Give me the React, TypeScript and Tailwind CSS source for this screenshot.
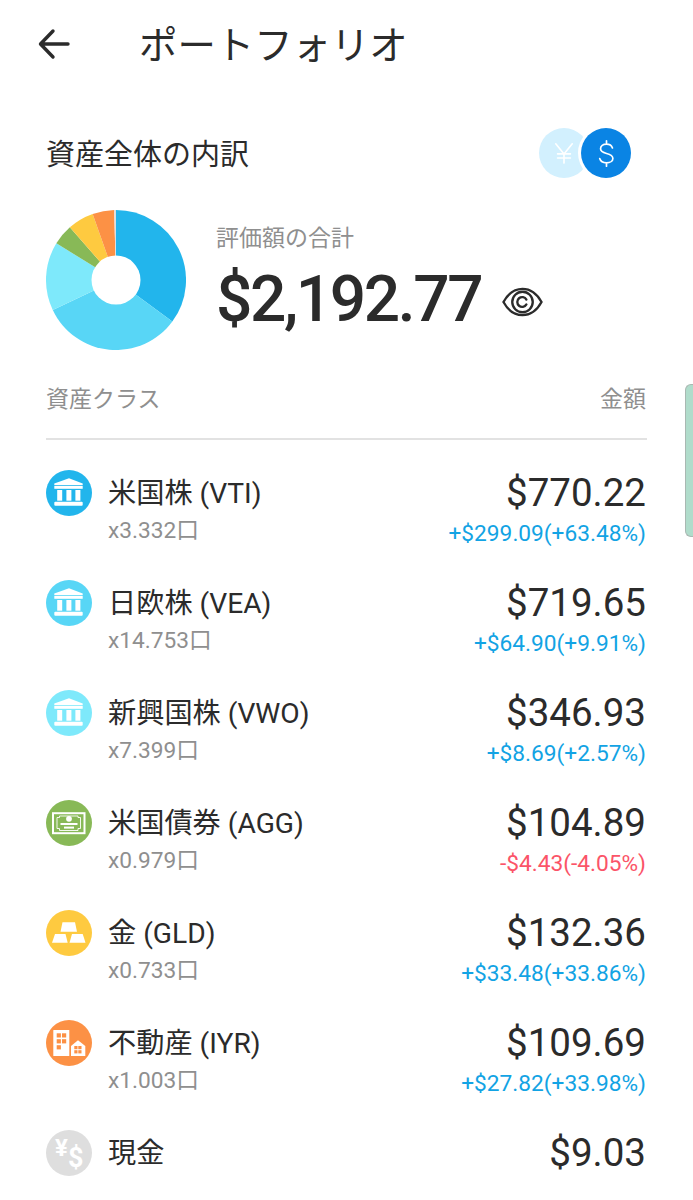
import React from 'react'

const FONT = "font-['Roboto','Noto_Sans_CJK_JP',sans-serif]"

type Asset = {
  name: string
  units?: string
  value: string
  amount: number
  change?: string
  down?: boolean
  color: string
  icon: React.ReactNode
}

const Bank = () => (
  <svg viewBox="0 0 46 46" className="w-full h-full" fill="#fff">
    <path d="M23 8.3 L36.7 13.5 V15 H8.3 V13.5 Z" />
    <rect x="8.3" y="15.8" width="28.4" height="3" />
    <rect x="11.2" y="20" width="5" height="10.7" />
    <rect x="20.4" y="20" width="5" height="10.7" />
    <rect x="29.4" y="20" width="5" height="10.7" />
    <rect x="8.3" y="31.8" width="28.4" height="3.9" rx="1" />
  </svg>
)

const Bond = () => (
  <svg viewBox="0 0 46 46" className="w-full h-full">
    <rect x="7" y="13.2" width="31.5" height="20" fill="none" stroke="#fff" strokeWidth="2" />
    <path
      d="M13.5 16 H32 V17.5 H34.5 V28.5 H32 V30.5 H13.5 V28.5 H11 V17.5 H13.5 Z"
      fill="none"
      stroke="#fff"
      strokeWidth="0.9"
    />
    <circle cx="23" cy="18.8" r="2.9" fill="#fff" />
    <rect x="14.5" y="23" width="17" height="2" fill="#fff" />
    <rect x="18" y="26.6" width="10" height="2" fill="#fff" />
  </svg>
)

const Gold = () => (
  <svg viewBox="0 0 46 46" className="w-full h-full" fill="#fff">
    <path d="M16.5 12.3 H29 L31 21.7 H14.5 Z" />
    <path d="M9 24 H19.5 L21.7 32.7 H6 Z" />
    <path d="M26 24 H36.7 L39.5 32.7 H23.5 Z" />
  </svg>
)

const Estate = () => (
  <svg viewBox="0 0 46 46" className="w-full h-full">
    <rect x="7.3" y="10" width="16" height="26" rx="0.5" fill="#fff" />
    {[
      [10.7, 13.3],
      [16, 13.3],
      [10.7, 19.2],
      [16, 19.2],
      [10.7, 25.2]
    ].map(([x, y]) => (
      <rect key={`${x}-${y}`} x={x} y={y} width="4.2" height="4.2" fill="#FC9145" />
    ))}
    <path d="M25 36 V26 L32 20.3 L39.3 26 V36 Z" fill="#fff" />
    <rect x="28.3" y="26" width="3.2" height="3.2" fill="#FC9145" />
    <rect x="32.3" y="26" width="3.2" height="3.2" fill="#FC9145" />
    <rect x="28.3" y="30.2" width="3.2" height="3.2" fill="#FC9145" />
    <rect x="32.3" y="30.2" width="3.2" height="3.2" fill="#FC9145" />
  </svg>
)

const Cash = () => (
  <div className="relative w-full h-full text-white font-bold font-['Roboto',sans-serif]">
    <span className="absolute left-[9px] top-[4px] text-[24px] leading-[28px]">¥</span>
    <span className="absolute left-[22px] top-[13px] text-[27px] leading-[30px]">$</span>
  </div>
)

const assets: Asset[] = [
  { name: '米国株 (VTI)', units: 'x3.332口', value: '$770.22', amount: 770.22, change: '+$299.09(+63.48%)', color: '#22B5EC', icon: <Bank /> },
  { name: '日欧株 (VEA)', units: 'x14.753口', value: '$719.65', amount: 719.65, change: '+$64.90(+9.91%)', color: '#58D6F6', icon: <Bank /> },
  { name: '新興国株 (VWO)', units: 'x7.399口', value: '$346.93', amount: 346.93, change: '+$8.69(+2.57%)', color: '#7EE9FB', icon: <Bank /> },
  { name: '米国債券 (AGG)', units: 'x0.979口', value: '$104.89', amount: 104.89, change: '-$4.43(-4.05%)', down: true, color: '#88B957', icon: <Bond /> },
  { name: '金 (GLD)', units: 'x0.733口', value: '$132.36', amount: 132.36, change: '+$33.48(+33.86%)', color: '#FECA40', icon: <Gold /> },
  { name: '不動産 (IYR)', units: 'x1.003口', value: '$109.69', amount: 109.69, change: '+$27.82(+33.98%)', color: '#FC9145', icon: <Estate /> },
  { name: '現金', value: '$9.03', amount: 9.03, color: '#DEDEDE', icon: <Cash /> }
]

const Donut = () => {
  const total = assets.reduce((sum, a) => sum + a.amount, 0)
  let start = 0
  const point = (deg: number) => {
    const rad = (deg * Math.PI) / 180
    return `${70 + 70 * Math.sin(rad)} ${70 - 70 * Math.cos(rad)}`
  }
  return (
    <svg viewBox="0 0 140 140" className="w-[140px] h-[140px] shrink-0">
      {assets.map((a) => {
        const sweep = (a.amount / total) * 360
        const d = `M70 70 L${point(start)} A70 70 0 ${sweep > 180 ? 1 : 0} 1 ${point(start + sweep)} Z`
        start += sweep
        return <path key={a.name} d={d} fill={a.color} />
      })}
      <circle cx="70" cy="70" r="24.5" fill="#fff" />
    </svg>
  )
}

const Row = ({ item }: { item: Asset }) => (
  <div className="flex h-[110px] items-start">
    <div
      className="w-[46px] h-[46px] rounded-full shrink-0 overflow-hidden"
      style={{ backgroundColor: item.color }}
    >
      {item.icon}
    </div>
    <div className="ml-[16px] flex-1">
      <div className="text-[28.2px] leading-[38px] text-[#2b2b2b] font-normal mt-[5px]">
        {item.name}
      </div>
      {item.units && (
        <div className="text-[22.7px] leading-[24px] text-[#8f8f8f] mt-[6px]">{item.units}</div>
      )}
    </div>
    <div className="flex flex-col items-end mt-[1px]">
      <div className="text-[38.5px] leading-[44px] text-[#2b2b2b] font-normal">{item.value}</div>
      {item.change && (
        <div className={`text-[22.7px] leading-[26px] mt-[6px] ${item.down ? 'text-[#FB5468]' : 'text-[#12A3E4]'}`}>
          {item.change}
        </div>
      )}
    </div>
  </div>
)

export default function App() {
  return (
    <div className={`${FONT} relative w-[693px] h-[1200px] overflow-hidden bg-white`}>
      <header className="flex items-center h-[88px] pl-[38px]">
        <svg viewBox="0 0 32 32" className="w-[32px] h-[32px] -mt-[1px]" fill="none" stroke="#2b2b2b" strokeWidth="3.4" strokeLinecap="round" strokeLinejoin="round">
          <path d="M30 16 H3 M15 3 L2.5 16 L15 29" />
        </svg>
        <h1 className="ml-[69px] mt-[3px] text-[38.4px] leading-[48px] font-normal text-[#2b2b2b]">ポートフォリオ</h1>
      </header>

      <main className="pl-[46px] w-[646px]">
        <div className="flex items-center justify-between mt-[39px] h-[52px]">
          <h2 className="text-[29px] leading-[40px] mt-[4px] font-normal text-[#2b2b2b]">資産全体の内訳</h2>
          <div className="relative flex w-[92px] h-[50px] mr-[15px]">
            <div className="w-[50px] h-[50px] rounded-full bg-[#D2F0FE] flex items-center justify-center">
              <svg viewBox="0 0 24 24" className="w-[22px] h-[30px]" fill="none" stroke="#fff" strokeWidth="1.8" strokeLinecap="round">
                <path d="M3 2 L12 13 L21 2 M12 13 V23 M5 13 H19 M5 17.5 H19" />
              </svg>
            </div>
            <div className="absolute left-[42px] top-0 w-[50px] h-[50px] rounded-full bg-[#0A84E4] ring-[3px] ring-white flex items-center justify-center">
              <svg viewBox="0 0 20 32" className="w-[17px] h-[29px]" fill="none" stroke="#fff" strokeWidth="2" strokeLinecap="round">
                <path d="M10 1 V5 M10 27 V31 M17 9.5 C16 6.5 13 5 10 5 C6 5 3 7.2 3 10.5 C3 14 6 15 10 16 C14 17 17.5 18.2 17.5 21.8 C17.5 25 14 27 10 27 C6 27 3 25.3 2 22" />
              </svg>
            </div>
          </div>
        </div>

        <section className="flex mt-[31px]">
          <Donut />
          <div className="ml-[30px] pt-[14px]">
            <div className="text-[23px] leading-[30px] text-[#8f8f8f]">評価額の合計</div>
            <div className="flex items-center mt-[11px]">
              <span className="text-[64px] leading-[70px] font-medium text-[#2b2b2b] tracking-[-2.4px]">$2,192.77</span>
              <svg viewBox="0 0 42 32" className="ml-[21px] mt-[4px] w-[41px] h-[32px]" fill="none" stroke="#2b2b2b" strokeWidth="2.4" strokeLinecap="round">
                <path d="M1.5 16 C7 6 14 2.5 21 2.5 C28 2.5 35 6 40.5 16 C35 26 28 29.5 21 29.5 C14 29.5 7 26 1.5 16 Z" />
                <circle cx="21" cy="16" r="10.5" />
                <path d="M25 13.5 A5 5 0 1 0 25 18.5" />
              </svg>
            </div>
          </div>
        </section>

        <div className="flex justify-between mt-[33px] text-[23px] leading-[34px] text-[#8f8f8f]">
          <span>資産クラス</span>
          <span>金額</span>
        </div>
        <div className="h-[2px] bg-[#e2e2e2] mt-[21px] w-[601px]" />

        <div className="mt-[30px]">
          {assets.map((a) => (
            <Row key={a.name} item={a} />
          ))}
        </div>
      </main>

      <div className="absolute right-0 top-[384px] w-[8px] h-[153px] rounded-l-[6px] bg-[#B0DCCB] border border-r-0 border-[#a9b8b2]" />
    </div>
  )
}
